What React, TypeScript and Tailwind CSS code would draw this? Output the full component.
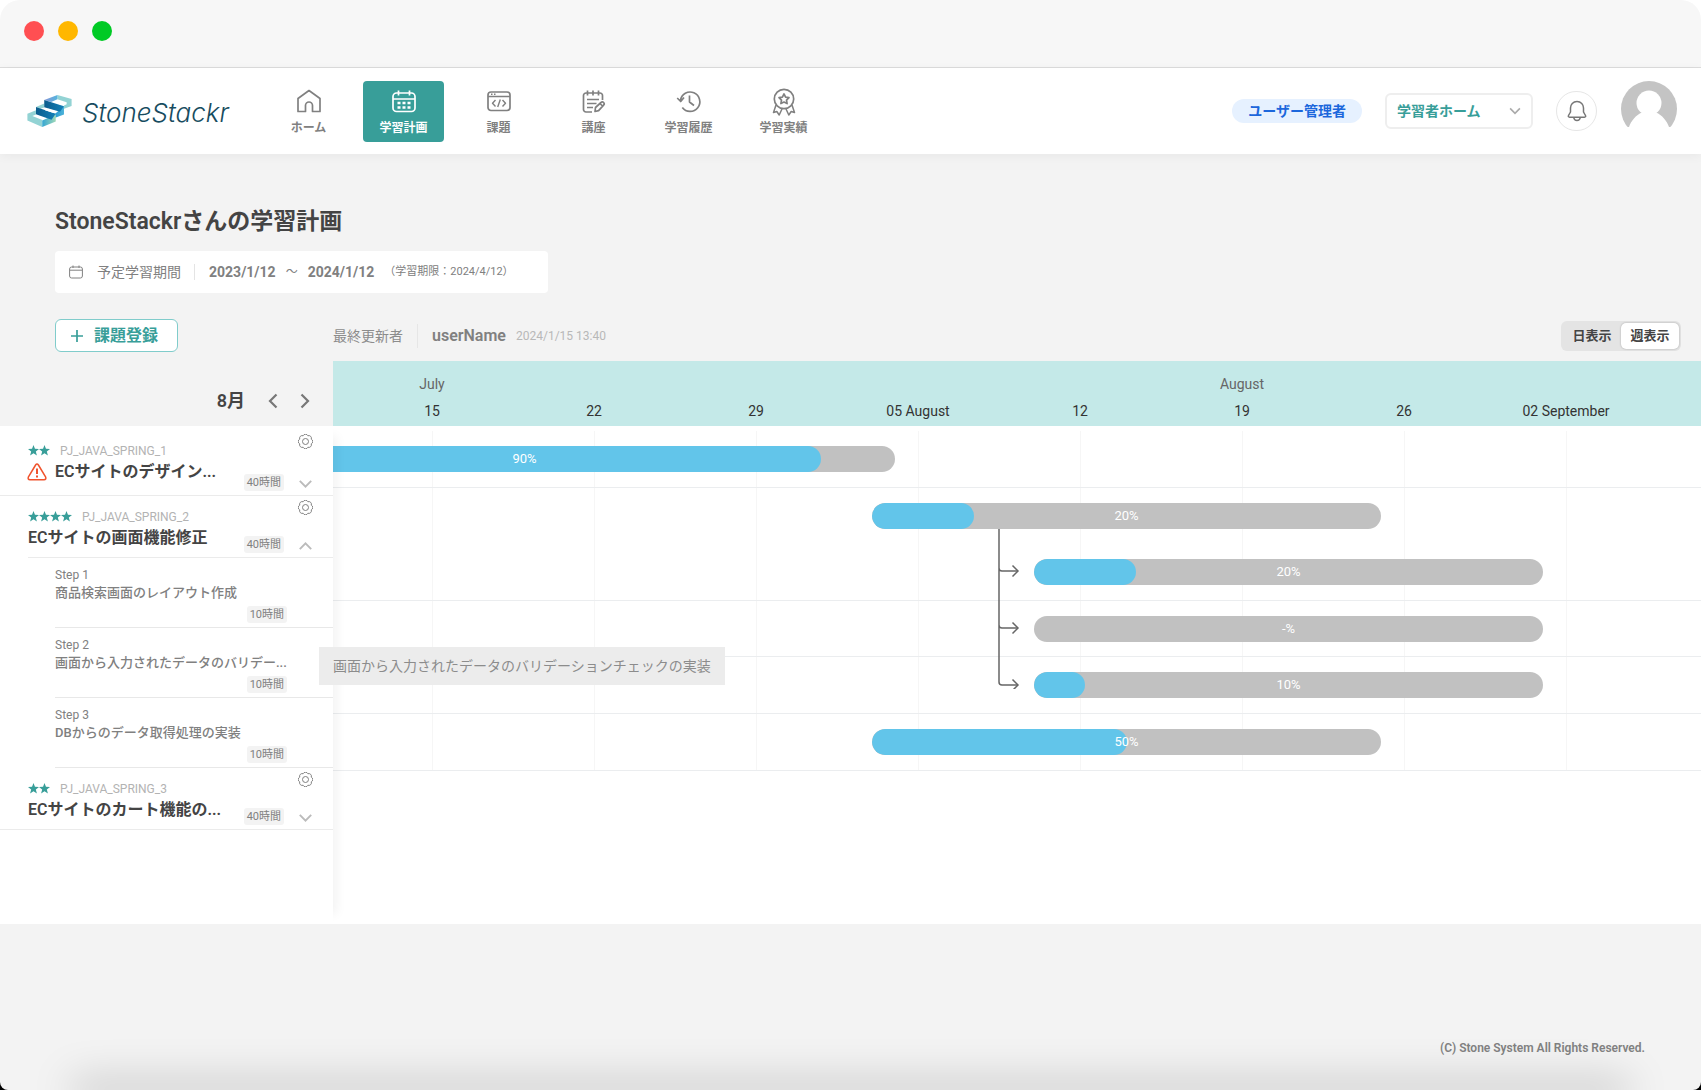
import type { ReactNode } from "react";
import clsx from "clsx";

const DAY = 162 / 7;

const navItems = [
  { label: "ホーム", icon: <HomeIcon /> },
  { label: "学習計画", icon: <PlanIcon />, active: true },
  { label: "課題", icon: <CodeIcon /> },
  { label: "講座", icon: <NoteIcon /> },
  { label: "学習履歴", icon: <HistoryIcon /> },
  { label: "学習実績", icon: <MedalIcon /> },
];

const weeks = [
  { month: "July", label: "15" },
  { month: "", label: "22" },
  { month: "", label: "29" },
  { month: "", label: "05 August" },
  { month: "", label: "12" },
  { month: "August", label: "19" },
  { month: "", label: "26" },
  { month: "", label: "02 September" },
];

// start and length are in days, counted from the left edge of the chart
type BarData = { start: number; days: number; progress: number | null };

const bars: BarData[][] = [
  [{ start: -7.75, days: 32, progress: 90 }],
  [
    { start: 23.3, days: 22, progress: 20 },
    { start: 30.3, days: 22, progress: 20 },
  ],
  [{ start: 30.3, days: 22, progress: null }],
  [{ start: 30.3, days: 22, progress: 10 }],
  [{ start: 23.3, days: 22, progress: 50 }],
];

const steps = [
  { name: "Step 1", title: "商品検索画面のレイアウト作成" },
  { name: "Step 2", title: "画面から入力されたデータのバリデー..." },
  { name: "Step 3", title: "DBからのデータ取得処理の実装" },
];

export default function App() {
  return (
    <div className="flex min-h-screen flex-col bg-black font-['Roboto','Noto_Sans_CJK_JP',sans-serif] text-[#444]">
      <div className="relative flex flex-1 flex-col overflow-hidden rounded-b-lg bg-[#f3f3f3]">
        <TitleBar />
        <Header />
        <main className="pt-[52px]">
          <div className="px-[55px]">
            <h1 className="text-[23px] leading-8 font-semibold">StoneStackrさんの学習計画</h1>
            <Period />
          </div>
          <Toolbar />
          <div className="grid grid-cols-[333px_minmax(0,1fr)] grid-rows-[65px_498px]">
            <div className="flex items-center justify-end gap-4 pt-[14px] pr-4">
              <span className="text-lg font-semibold">8月</span>
              <div className="flex gap-2">
                <button type="button" aria-label="前の月" className="flex w-6 justify-center">
                  <Chevron className="h-4 w-4 rotate-90 stroke-[#777]" />
                </button>
                <button type="button" aria-label="次の月" className="flex w-6 justify-center">
                  <Chevron className="h-4 w-4 -rotate-90 stroke-[#777]" />
                </button>
              </div>
            </div>
            <div className="flex overflow-hidden bg-[#c4e9e8] pl-[18px]">
              {weeks.map((w) => (
                <div key={w.label} className="flex w-[162px] shrink-0 flex-col items-center pt-3 text-sm leading-[22px]">
                  <span className="mb-[5px] h-[22px] text-[#666]">{w.month}</span>
                  <span className="text-[#333]">{w.label}</span>
                </div>
              ))}
            </div>
            <TaskList />
            <Chart />
          </div>
        </main>
        <footer className="relative flex flex-1 items-end justify-end px-14 pb-[34px]">
          <div className="absolute inset-x-20 bottom-0 h-0 shadow-[0_0_40px_8px_rgba(0,0,0,0.25)]" />
          <small className="relative text-xs leading-4 font-semibold text-[#808080]">
            (C) Stone System All Rights Reserved.
          </small>
        </footer>
      </div>
    </div>
  );
}

function TitleBar() {
  return (
    <div className="bg-white">
      <div className="flex h-[68px] gap-[14px] rounded-t-[20px] border-b border-[#ddd] bg-[#f7f7f7] pt-[21px] pl-6">
        <span className="h-5 w-5 rounded-full bg-[#ff4f52]" />
        <span className="h-5 w-5 rounded-full bg-[#ffb700]" />
        <span className="h-5 w-5 rounded-full bg-[#00ca25]" />
      </div>
    </div>
  );
}

function Header() {
  return (
    <header className="relative flex h-[86px] shrink-0 items-center bg-white pr-6 pl-[27px] shadow-[0_2px_10px_rgba(0,0,0,0.05)]">
      <a href="#" className="flex w-[241px] items-center gap-[10px]">
        <LogoMark />
        <span className="pt-1 font-['Inter'] text-[26px] leading-8 font-light whitespace-nowrap text-[#174c60] italic">
          StoneStackr
        </span>
      </a>
      <nav className="flex gap-[14px]">
        {navItems.map((item) => (
          <a
            key={item.label}
            href="#"
            className={clsx(
              "flex h-[61px] w-[81px] flex-col items-center gap-1 rounded pt-[7px] text-xs leading-4 font-semibold",
              item.active ? "bg-[#389e99] text-white" : "text-[#808080]",
            )}
          >
            {item.icon}
            {item.label}
          </a>
        ))}
      </nav>
      <div className="ml-auto flex items-center">
        <span className="rounded-full bg-[#e6f1ff] px-4 py-[2px] text-sm leading-5 font-semibold text-[#1c67dc]">
          ユーザー管理者
        </span>
        <div className="relative ml-[23px]">
          <select
            aria-label="ホーム切替"
            className="h-9 w-[148px] appearance-none rounded-md border-2 border-[#eee] bg-white pl-[10px] text-sm font-semibold text-[#389e99]"
          >
            <option>学習者ホーム</option>
          </select>
          <Chevron className="pointer-events-none absolute top-3 right-3 h-3 w-3 stroke-[#aaa]" />
        </div>
        <button
          type="button"
          aria-label="通知"
          className="ml-[23px] flex h-10 w-[41px] items-center justify-center rounded-full border border-[#e6e6e6]"
        >
          <BellIcon />
        </button>
        <Avatar />
      </div>
    </header>
  );
}

function Period() {
  return (
    <div className="mt-[13px] flex h-[42px] w-[493px] items-center rounded bg-white pl-[14px] text-[#808080]">
      <svg viewBox="0 0 14 14" className="h-[14px] w-[14px]" fill="none" stroke="currentColor">
        <rect x="0.6" y="2" width="12.8" height="11" rx="2" />
        <path d="M1 5.2h12M4 .5v2.5M10 .5v2.5" />
      </svg>
      <span className="ml-[14px] text-sm">予定学習期間</span>
      <span className="mr-[14px] ml-[13px] h-4 w-px bg-[#e4e4e4]" />
      <span className="text-sm font-bold">2023/1/12</span>
      <span className="mx-[10px] text-xs">～</span>
      <span className="text-sm font-bold">2024/1/12</span>
      <span className="ml-[10px] text-[11px]">（学習期限：2024/4/12）</span>
    </div>
  );
}

function Toolbar() {
  return (
    <div className="grid h-[68px] grid-cols-[333px_1fr] items-end pb-[9px]">
      <div className="pl-[55px]">
        <button
          type="button"
          className="flex h-[33px] items-center gap-[11px] rounded-md border border-[#80cccb] bg-white pr-[19px] pl-[15px] font-semibold text-[#389e99]"
        >
          <svg viewBox="0 0 12 12" className="h-3 w-3" stroke="currentColor" strokeWidth="1.7">
            <path d="M6 0v12M0 6h12" />
          </svg>
          課題登録
        </button>
      </div>
      <div className="flex h-[33px] items-center pr-5">
        <span className="text-sm text-[#8c8c8c]">最終更新者</span>
        <span className="mx-[14px] h-6 w-px bg-[#e6e6e6]" />
        <span className="font-semibold text-[#808080]">userName</span>
        <span className="ml-[10px] text-xs text-[#b8b8b8]">2024/1/15 13:40</span>
        <div className="ml-auto flex h-[30px] rounded-md bg-[#e4e4e4] p-[2px] text-[13px] font-semibold">
          <button type="button" className="w-[58px]">
            日表示
          </button>
          <button type="button" className="w-[58px] rounded-[5px] bg-white shadow-[0_0_2px_rgba(0,0,0,0.3)]">
            週表示
          </button>
        </div>
      </div>
    </div>
  );
}

function TaskList() {
  return (
    <div className="relative z-10 bg-white shadow-[14px_0_10px_-10px_rgba(0,0,0,0.05)]">
      <Task stars={2} code="PJ_JAVA_SPRING_1" title="ECサイトのデザイン..." warning />
      <Task stars={4} code="PJ_JAVA_SPRING_2" title="ECサイトの画面機能修正" open />
      <ul className="pl-[55px]">
        {steps.map((s) => (
          <li key={s.name} className="relative flex h-[70px] flex-col border-b border-[#e8e8e8] pt-2 text-[#808080]">
            <span className="text-xs leading-[18px]">{s.name}</span>
            <span className="text-[13px] leading-[18px] font-medium whitespace-nowrap">{s.title}</span>
            <div className="mt-1 flex justify-end pr-[46px]">
              <Hours>10時間</Hours>
            </div>
            {s.name === "Step 2" && (
              <div
                role="tooltip"
                className="absolute top-[19px] left-[264px] bg-[#ececec] px-[14px] py-[9px] text-sm leading-5 whitespace-nowrap text-[#8c8c8c]"
              >
                画面から入力されたデータのバリデーションチェックの実装
              </div>
            )}
          </li>
        ))}
      </ul>
      <Task stars={2} code="PJ_JAVA_SPRING_3" title="ECサイトのカート機能の..." />
    </div>
  );
}

type TaskProps = { stars: number; code: string; title: string; warning?: boolean; open?: boolean };

function Task({ stars, code, title, warning, open }: TaskProps) {
  return (
    <div className={clsx(!open && "border-b border-[#ebebeb]")}>
      <div
        className={clsx(
          "ml-7 flex pr-5",
          warning ? "h-[69px] pt-4" : "pt-3",
          open ? "h-[62px] border-b border-[#ebebeb]" : !warning && "h-[61px]",
        )}
      >
        <div className="flex flex-1 flex-col">
          <div className="flex h-[17px] items-center">
            {Array.from({ length: stars }, (_, i) => (
              <svg key={i} viewBox="0 0 24 24" className="h-[11px] w-[11px] fill-[#389e99]">
                <path d="M12 0l3.2 8.4 8.8.5-6.900 5.500 2.300 8.600L12 18.200 4.600 23l2.300-8.600L0 8.900l8.800-.5z" />
              </svg>
            ))}
            <span className="ml-[10px] text-xs text-[#b3b3b3]">{code}</span>
          </div>
          <div className="flex items-center text-base leading-[26px] font-semibold whitespace-nowrap">
            {warning && <WarningIcon />}
            {title}
          </div>
        </div>
        <div className="flex items-end pb-1">
          <Hours>40時間</Hours>
        </div>
        <div className="-mt-2 ml-[14px] flex w-[15px] flex-col items-center justify-between pb-1">
          <button type="button" aria-label="設定">
            <GearIcon />
          </button>
          <button type="button" aria-label={open ? "閉じる" : "開く"}>
            <Chevron className={clsx("h-[14px] w-[15px] stroke-[#bbb]", open && "rotate-180")} />
          </button>
        </div>
      </div>
    </div>
  );
}

function Hours({ children }: { children: ReactNode }) {
  return (
    <span className="h-[17px] rounded-[3px] bg-[#f3f3f3] px-[3px] text-[11px] leading-[17px] whitespace-nowrap text-[#808080]">
      {children}
    </span>
  );
}

function Chart() {
  return (
    <div className="overflow-hidden bg-white">
      <div className="relative">
        <div className="absolute top-[5px] bottom-0 left-[99px] flex">
          {weeks.map((w) => (
            <div key={w.label} className="w-[162px] shrink-0 border-l border-[#f6f6f6]" />
          ))}
        </div>
        {bars.map((group, i) => (
          <div
            key={i}
            className={clsx(
              "relative flex flex-col gap-[30px] border-b border-[#ebedef]",
              i === 0 ? "pt-5" : "pt-[15px]",
              i === 2 ? "pb-[14px]" : "pb-[15px]",
            )}
          >
            {group.map((bar, j) => (
              <Bar key={j} {...bar} />
            ))}
          </div>
        ))}
        <svg
          viewBox="0 0 22 160"
          className="absolute top-[103px] left-[665px] h-[160px] w-[22px]"
          fill="none"
          stroke="#666"
          strokeWidth="1.5"
        >
          <path d="M1 0v153q0 3 3 3h16M1 39q0 3 3 3h16M1 96q0 3 3 3h16" />
          <path d="M14.500 36.500l5.500 5.500-5.500 5.500M14.500 93.500l5.500 5.500-5.500 5.500M14.500 150.500l5.500 5.500-5.500 5.500" />
        </svg>
      </div>
    </div>
  );
}

function Bar({ start, days, progress }: BarData) {
  return (
    <div
      className="grid h-[26px] items-center overflow-hidden rounded-full bg-[#c1c1c1]"
      style={{ marginLeft: Math.round(start * DAY), width: Math.round(days * DAY) }}
    >
      <div
        className="col-start-1 row-start-1 h-full rounded-full bg-[#62c5ea]"
        style={{ width: `${progress ?? 0}%` }}
      />
      <span className="col-start-1 row-start-1 text-center text-[13px] text-white">{progress ?? "-"}%</span>
    </div>
  );
}

function Chevron({ className }: { className?: string }) {
  return (
    <svg viewBox="0 0 16 16" className={className} fill="none" strokeWidth="2.200">
      <path d="M1.500 4.500L8 11l6.500-6.500" />
    </svg>
  );
}

function LogoMark() {
  return (
    <svg viewBox="0 0 134 97" className="h-8 w-[45px]">
      <defs>
        <linearGradient id="violet" x1="0" x2="1">
          <stop offset="0" stopColor="#8795d6" />
          <stop offset="1" stopColor="#55b5de" />
        </linearGradient>
        <linearGradient id="blue" x1="0" x2="1">
          <stop offset="0" stopColor="#2a9bd0" />
          <stop offset="1" stopColor="#4fb3d9" />
        </linearGradient>
        <linearGradient id="green" x1="0" x2="1">
          <stop offset="0" stopColor="#35a6d2" />
          <stop offset="1" stopColor="#9fd8b8" />
        </linearGradient>
        <linearGradient id="band" x1="0" x2="1">
          <stop offset="0" stopColor="#0b5c8c" />
          <stop offset="1" stopColor="#1480b8" />
        </linearGradient>
      </defs>
      <path fill="#93d3d4" d="M91 0l43 12v21l-23 9V32l8-4V22L91 13z" />
      <path fill="url(#violet)" d="M51 15L91 0v13L72 21z" />
      <path fill="#93d3d4" d="M26 36l25-10v12l-12 4z" />
      <path fill="url(#blue)" d="M111 33v26l-27 10V57z" />
      <path fill="url(#band)" d="M51 15l60 19-12 17-48-14z" />
      <path fill="#93d3d4" d="M0 57l26-11v13l-11 5 30 12v21L0 77z" />
      <path fill="url(#green)" d="M86 59v21L45 97V77z" />
      <path fill="url(#band)" d="M26 36l60 21-13 18-47-17z" />
      <path fill="#fff" d="M80 21l14-5 22 8-13 6zM53 46l10-4 25 8-11 4z" />
    </svg>
  );
}

function NavSvg({ children }: { children: ReactNode }) {
  return (
    <svg viewBox="0 0 26 28" className="h-7 w-[26px]" fill="none" stroke="currentColor" strokeWidth="1.700" strokeLinejoin="round">
      {children}
    </svg>
  );
}

function HomeIcon() {
  return (
    <NavSvg>
      <path d="M2 10.500L13 2.500l11 8v13h-7.500v-6a3.500 3.500 0 0 0-7 0v6H2z" />
    </NavSvg>
  );
}

function PlanIcon() {
  return (
    <NavSvg>
      <rect x="2" y="5" width="22" height="18.500" rx="3.500" />
      <path d="M2 11h22M7.500 2.500v5M18.500 2.500v5" />
      <path strokeWidth="2.400" d="M6.500 15h3M11.500 15h3M16.500 15h3M6.500 19.500h3M11.500 19.500h3M16.500 19.500h3" />
    </NavSvg>
  );
}

function CodeIcon() {
  return (
    <NavSvg>
      <rect x="2" y="4" width="22" height="18.500" rx="3" />
      <path strokeWidth="1.400" d="M2 8.500h22M5 6.300h1.500M8 6.300h1.500M9.500 12l-3 3.200 3 3.300M16.500 12l3 3.200-3 3.300M14.300 11.500l-2.600 7.500" />
    </NavSvg>
  );
}

function NoteIcon() {
  return (
    <NavSvg>
      <path d="M11 24H5a2.500 2.500 0 0 1-2.500-2.500v-14A2.500 2.500 0 0 1 5 5h14a2.500 2.500 0 0 1 2.500 2.500V12M6.500 2.500v5M12 2.500v5M17.500 2.500v5M6 11.500h12M6 15.500h9.500M6 19.500h6" />
      <path d="M14 23.500l.5-4 5.500-5a1.800 1.800 0 0 1 2.600 2.600l-5 5.500zM19 15.500l2.500 2.500" />
    </NavSvg>
  );
}

function HistoryIcon() {
  return (
    <NavSvg>
      <path d="M4.500 12.500a9.700 9.700 0 1 1 1.800 7M1.200 10l3.500 3.500L8 9.500M13.500 7.500v6.500l4.500 3.500" />
    </NavSvg>
  );
}

function MedalIcon() {
  return (
    <NavSvg>
      <circle cx="13" cy="11" r="9.700" />
      <path d="M13 6l1.600 3.200 3.400.5-2.500 2.500.6 3.400L13 14l-3.100 1.600.6-3.400L8 9.700l3.400-.5z" />
      <path strokeWidth="1.500" d="M5 17l-2.500 7.500 3.300-1L8.200 27l3-6.500M21 17l2.500 7.500-3.300-1L17.800 27l-3-6.500" />
    </NavSvg>
  );
}

function BellIcon() {
  return (
    <svg viewBox="0 0 20 22" className="h-[22px] w-5" fill="none" stroke="#777" strokeWidth="1.500" strokeLinejoin="round">
      <path d="M10 1.500c-4 0-6.500 3-6.500 6.500v4L1.500 15.500c-.5 1 0 1.700 1 1.700h15c1 0 1.500-.7 1-1.700L16.500 12V8c0-3.500-2.500-6.500-6.500-6.500zM6.700 17.500c.3 1.900 1.600 3 3.300 3s3-1.100 3.300-3" />
    </svg>
  );
}

function Avatar() {
  return (
    <svg viewBox="0 0 56 60" className="ml-6 h-[60px] w-14">
      <circle cx="28" cy="28" r="28" fill="#c4c4c4" />
      <circle cx="28" cy="22" r="12.500" fill="#fff" />
      <path fill="#fff" d="M0 60V46h8c2-6 7-12 13-14.500h14C41 34 46 40 48 46h8v14z" />
    </svg>
  );
}

function WarningIcon() {
  return (
    <svg viewBox="0 0 20 18" className="mr-2 -ml-px h-[18px] w-5" fill="none" stroke="#f0532d" strokeWidth="1.500" strokeLinejoin="round">
      <path d="M8.600 2q1.400-2 2.800 0l7.300 12.200q.8 2.300-1.700 2.500H3q-2.500-.2-1.700-2.500z" />
      <path strokeWidth="2" d="M10 5.500v5.500M10 12.500v2" />
    </svg>
  );
}

function GearIcon() {
  return (
    <svg viewBox="0 0 24 24" className="h-[15px] w-[15px]" fill="none" stroke="#808080" strokeWidth="1.600" strokeLinejoin="round">
      <circle cx="12" cy="12" r="4.800" />
      <path d="M21.200 8.200a4.200 4.200 0 0 1 0 7.600a4.200 4.200 0 0 1-5.400 5.400a4.200 4.200 0 0 1-7.600 0a4.200 4.200 0 0 1-5.400-5.400a4.200 4.200 0 0 1 0-7.600a4.200 4.200 0 0 1 5.400-5.400a4.200 4.200 0 0 1 7.600 0a4.200 4.200 0 0 1 5.400 5.400z" />
    </svg>
  );
}
